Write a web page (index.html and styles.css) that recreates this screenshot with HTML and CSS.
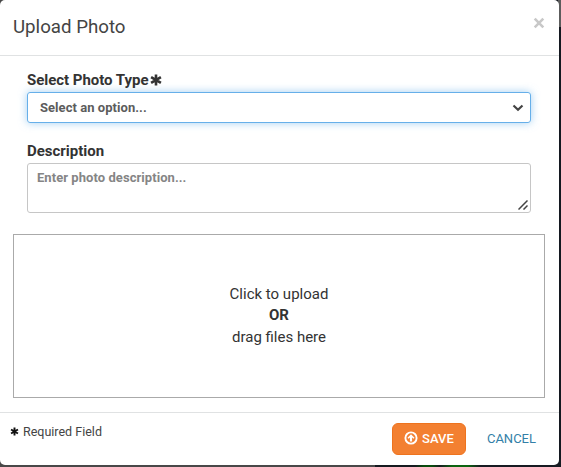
FILE: index.html
```html
<!DOCTYPE html>
<html lang="en">
<head>
<meta charset="utf-8">
<title>Upload Photo</title>
<link rel="stylesheet" href="styles.css">
</head>
<body>
<div class="modal">
  <header class="modal-header">
    <h1 class="title">Upload Photo</h1>
    <svg class="close" viewBox="0 0 12 12"><path d="M1.700 1.700l8.600 8.600M10.300 1.700l-8.600 8.600"/></svg>
  </header>
  <main class="modal-body">
    <div class="field">
      <div class="label"><span class="label-type">Select Photo Type</span><svg class="star" viewBox="0 0 12 12"><path d="M6 .4v11.2M1.100 3.100l9.800 5.800M10.900 3.100L1.100 8.900"/></svg></div>
      <div class="select"><span class="select-text">Select an option...</span><svg class="chevron" viewBox="0 0 12 8"><path d="M1.500 1.500L6 5.700l4.500-4.200"/></svg></div>
    </div>
    <div class="field">
      <div class="label"><span class="label-desc">Description</span></div>
      <div class="textarea"><span class="placeholder">Enter photo description...</span><svg class="grip" viewBox="0 0 10 10"><path d="M.5 9.500l9-9M5.500 9.500l4-4"/></svg></div>
    </div>
    <div class="dropzone">
      <span class="drop-click">Click to upload</span>
      <b class="drop-or">OR</b>
      <span class="drop-drag">drag files here</span>
    </div>
  </main>
  <footer class="modal-footer">
    <div class="required"><svg class="star-small" viewBox="0 0 12 12"><path d="M6 .7v10.600M1.400 3.300l9.200 5.400M10.600 3.300L1.400 8.700"/></svg><span class="required-text">Required Field</span></div>
    <div class="save"><svg class="up" viewBox="0 0 14 14"><circle cx="7" cy="7" r="5.600"/><path class="arrow" d="M7 3.200l3.500 3.600-1 1L8.100 6.600v4H5.900v-4L4.500 7.800l-1-1z"/></svg><span class="save-text">SAVE</span></div>
    <span class="cancel">CANCEL</span>
  </footer>
</div>
</body>
</html>
```
FILE: styles.css
```css
* { box-sizing: border-box; }
body {
  margin: 0;
  width: 561px;
  height: 467px;
  overflow: hidden;
  font-family: Roboto, "Liberation Sans", sans-serif;
  color: #333;
  background: linear-gradient(#5c5c5c 0 27px, #141820 27px 459px, transparent 459px) right / 3px 100% no-repeat,
    linear-gradient(90deg, #484848 0 375px, #151a20 375px 415px, #084d0c 424px 432px, #171b20 440px, #0b6410 452px 468px, #171b22 480px);
}
svg { display: block; flex: none; fill: none; stroke: currentColor; }
span, b { white-space: nowrap; }
.modal {
  width: 559px;
  height: 465px;
  background: #fff;
  border-radius: 5px;
  display: flex;
  flex-direction: column;
}
.modal-header {
  height: 56px;
  border-bottom: 1px solid #e0e2e3;
  padding: 0 14px 2px 13px;
  display: flex;
  align-items: center;
  justify-content: space-between;
}
.title { margin: 0; font-size: 18.7px; line-height: 24px; font-weight: 400; color: #444; }
.close { width: 12px; height: 12px; color: #c8c8c8; stroke-width: 2.6; margin: -8px 0 0; }
.modal-body { height: 356px; padding: 14px 14px 0 13px; }
.field { margin: 0 14px; }
.field + .field { margin-top: 18px; }
.label { height: 22px; padding-bottom: 2px; display: flex; align-items: center; font-size: 15px; font-weight: 700; line-height: 20px; }
.label-type { letter-spacing: -.03px; }
.star { width: 12px; height: 12px; stroke-width: 2.6; margin-left: 1px; }
.select {
  height: 31px;
  border: 1px solid #66afe9;
  border-radius: 3px;
  box-shadow: 0 0 8px rgba(102, 175, 233, .6);
  padding: 0 6px 0 12px;
  display: flex;
  align-items: center;
  justify-content: space-between;
  color: #5c5c5c;
  font-size: 13px;
  font-weight: 700;
  letter-spacing: .05px;
}
.chevron { width: 12px; height: 8px; stroke-width: 2.2; color: #444; }
.textarea {
  height: 50px;
  border: 1px solid #c6c6c6;
  border-radius: 3px;
  padding: 5px 2px 2px 9px;
  display: flex;
  justify-content: space-between;
  color: #858585;
  font-size: 13px;
  font-weight: 700;
  line-height: 18px;
  letter-spacing: .06px;
}
.grip { width: 10px; height: 10px; align-self: flex-end; stroke-width: 1.5; color: #444; }
.dropzone {
  height: 164px;
  margin-top: 21px;
  border: 1px solid #aaa;
  display: flex;
  flex-direction: column;
  align-items: center;
  justify-content: center;
  font-size: 15px;
  line-height: 21.4px;
}
.modal-footer {
  height: 53px;
  border-top: 1px solid #e0e2e3;
  padding: 10px 23px 0 10px;
  display: flex;
  align-items: flex-start;
}
.required { display: flex; align-items: center; height: 18px; margin-top: -1px; flex: 1; font-size: 12.5px; color: #444; }
.star-small { width: 9px; height: 9px; stroke-width: 2.6; margin-right: 4px; color: #111; }
.save {
  width: 74px;
  height: 32px;
  border: 1px solid #ee731e;
  border-radius: 6px;
  background: #f38031;
  color: #fff;
  display: flex;
  align-items: center;
  justify-content: center;
  font-size: 13px;
  font-weight: 500;
  padding-bottom: 1px;
}
.up { width: 14px; height: 14px; stroke-width: 1.9; margin-right: 4px; margin-top: -1px; }
.arrow { fill: currentColor; stroke: none; }
.cancel { margin-left: 21px; line-height: 32px; font-size: 13px; color: #337fa8; }
```
